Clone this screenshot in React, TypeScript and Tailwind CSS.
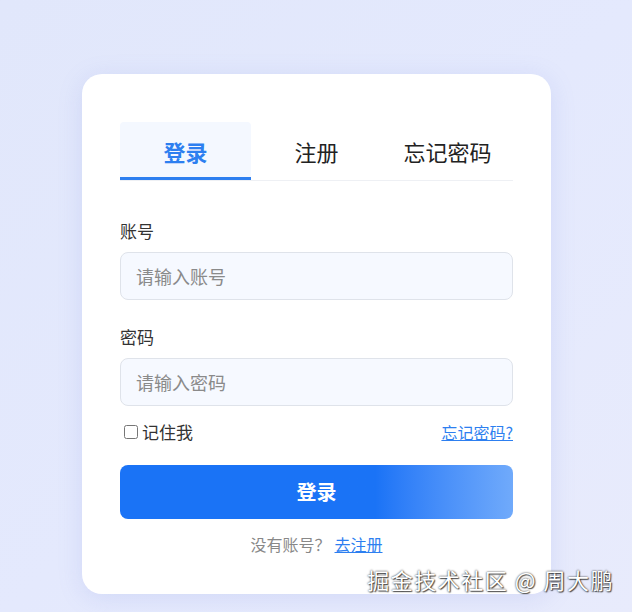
import { useState } from "react";

function App() {
  const [tab, setTab] = useState(0);
  const [remember, setRemember] = useState(false);
  const tabs = ["登录", "注册", "忘记密码"];

  return (
    <div
      className="relative min-h-[612px] w-full overflow-hidden bg-gradient-to-br from-[#e1e7fb] via-[#e4e9fd] to-[#e8ebfc] pl-[82px] pt-[74px]"
      style={{ fontFamily: '"Noto Sans CJK SC", "Noto Sans", sans-serif' }}
    >
      <div className="w-[469px] rounded-[20px] bg-white px-[38px] pt-[48px] pb-[38px] shadow-[0_4px_24px_rgba(120,140,220,0.18)]">
        <div className="flex border-b border-[#eef0f4]">
          {tabs.map((t, i) => (
            <button
              key={t}
              onClick={() => setTab(i)}
              className={
                i === tab
                  ? "flex h-[58px] flex-1 items-center justify-center rounded-t-[4px] border-b-[3px] border-[#2d7ff0] bg-[#f4f8ff] pt-[3px] text-[22px] font-bold text-[#2d7ff0]"
                  : "flex h-[58px] flex-1 items-center justify-center border-b-[3px] border-transparent pt-[3px] text-[22px] text-[#222]"
              }
            >
              {t}
            </button>
          ))}
        </div>

        <div className="mt-[39px]">
          <label className="block text-[17px] leading-[22px] text-[#333]">账号</label>
          <input
            type="text"
            placeholder="请输入账号"
            className="mt-[10px] h-[48px] w-full rounded-[8px] border border-[#dfe3ea] bg-[#f6f9ff] px-[15px] text-[18px] text-[#333] outline-none placeholder:text-[#8a8a8a]"
          />
        </div>

        <div className="mt-[26px]">
          <label className="block text-[17px] leading-[22px] text-[#333]">密码</label>
          <input
            type="password"
            placeholder="请输入密码"
            className="mt-[10px] h-[48px] w-full rounded-[8px] border border-[#dfe3ea] bg-[#f6f9ff] px-[15px] text-[18px] text-[#333] outline-none placeholder:text-[#8a8a8a]"
          />
        </div>

        <div className="mt-[14px] flex items-center justify-between">
          <label className="flex items-center gap-[4px] pl-[4px] text-[17px] leading-[22px] text-[#333]">
            <input
              type="checkbox"
              checked={remember}
              onChange={() => setRemember(!remember)}
              className="h-[14px] w-[14px]"
            />
            记住我
          </label>
          <a href="#" className="text-[16px] text-[#2d7ff0] underline">
            忘记密码?
          </a>
        </div>

        <button className="mt-[21px] h-[54px] w-full rounded-[8px] bg-gradient-to-r from-[#1a73f6] from-65% to-[#70aafb] text-[20px] font-bold text-white">
          登录
        </button>

        <div className="mt-[13px] text-center text-[16px] text-[#888]">
          没有账号？
          <a href="#" className="ml-[4px] text-[#2d7ff0] underline">
            去注册
          </a>
        </div>
      </div>

      <div className="absolute bottom-[16px] right-[18px] text-[22px] tracking-[1.5px] text-white [text-shadow:0_0_2px_rgba(0,0,0,0.9),1px_1px_1px_rgba(0,0,0,0.6)]">
        掘金技术社区 @ 周大鹏
      </div>
    </div>
  );
}

export default App;
